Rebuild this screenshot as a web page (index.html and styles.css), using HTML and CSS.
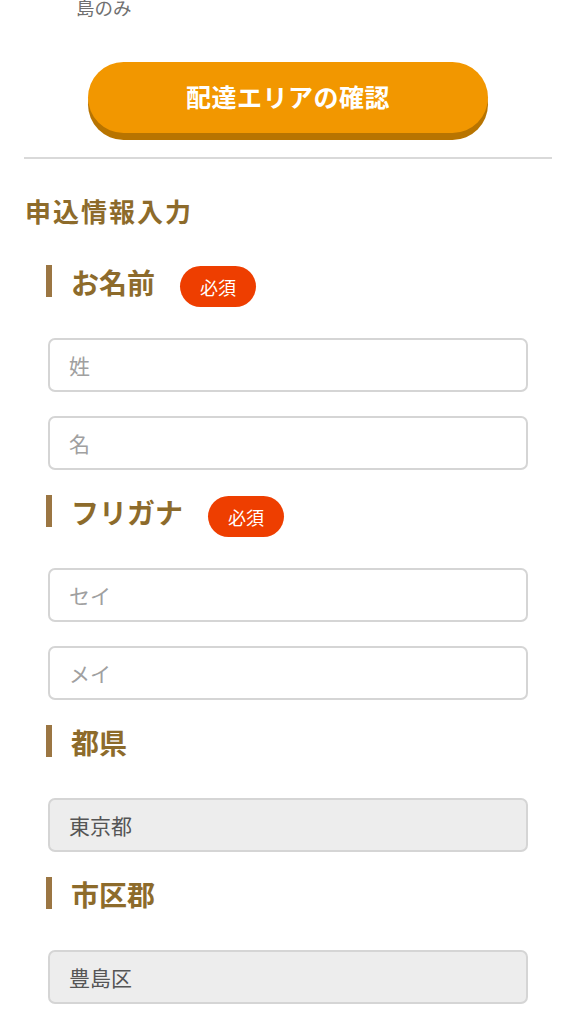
FILE: index.html
```html
<!DOCTYPE html>
<html lang="ja">
<head>
<meta charset="utf-8">
<title>申込情報入力</title>
<link rel="stylesheet" href="styles.css">
</head>
<body>
<div class="page">
  <p class="note">島のみ</p>
  <button class="area-btn" type="button">配達エリアの確認</button>
  <hr class="divider">
  <h2 class="title">申込情報入力</h2>
  <div class="form">
    <div class="field">
      <div class="label-row"><span class="label">お名前</span><span class="badge">必須</span></div>
      <div class="inputs">
        <input class="input" type="text" placeholder="姓">
        <input class="input" type="text" placeholder="名">
      </div>
    </div>
    <div class="field">
      <div class="label-row"><span class="label">フリガナ</span><span class="badge">必須</span></div>
      <div class="inputs">
        <input class="input" type="text" placeholder="セイ">
        <input class="input" type="text" placeholder="メイ">
      </div>
    </div>
    <div class="field">
      <div class="label-row"><span class="label">都県</span></div>
      <div class="inputs">
        <input class="input readonly" type="text" value="東京都" readonly>
      </div>
    </div>
    <div class="field">
      <div class="label-row"><span class="label">市区郡</span></div>
      <div class="inputs">
        <input class="input readonly" type="text" value="豊島区" readonly>
      </div>
    </div>
  </div>
</div>
</body>
</html>
```

FILE: styles.css
```css
* { box-sizing: border-box; }
html, body {
  margin: 0;
  padding: 0;
  background: #fff;
  font-family: "Noto Sans CJK JP", "Noto Sans", sans-serif;
}
.page {
  width: 576px;
  overflow: hidden;
}
.note {
  margin: 0;
  padding-left: 76px;
  font-size: 18.5px;
  line-height: 14px;
  height: 18px;
  color: #707070;
}
.area-btn {
  display: block;
  margin: 44px auto 0;
  width: 400px;
  height: 71px;
  border: none;
  border-radius: 36px;
  background: #f29700;
  box-shadow: 0 7px 0 #b87400;
  color: #fff;
  font-family: inherit;
  font-size: 25px;
  font-weight: 700;
  letter-spacing: 0.5px;
  padding: 0 0 3px;
}
.divider {
  margin: 24px 24px 0;
  border: none;
  height: 2px;
  background: #d9d9d9;
}
.title {
  margin: 32px 0 0;
  padding-left: 25px;
  font-size: 26px;
  line-height: 40px;
  letter-spacing: 2px;
  font-weight: 700;
  color: #8d6b2b;
}
.form {
  padding: 0 48px;
  display: flex;
  flex-direction: column;
  gap: 25px;
  margin-top: 34px;
}
.label-row {
  display: flex;
  align-items: flex-start;
  height: 32px;
  margin-left: -2px;
  margin-bottom: 41px;
}
.label {
  display: block;
  border-left: 6px solid #9b7643;
  padding-left: 19px;
  height: 32px;
  font-size: 28px;
  line-height: 34px;
  font-weight: 700;
  color: #8d6b2b;
}
.badge {
  display: flex;
  align-items: center;
  justify-content: center;
  margin-left: 25px;
  margin-top: 1px;
  width: 76px;
  height: 41px;
  border-radius: 21px;
  background: #ee3e00;
  color: #fff;
  font-size: 18px;
  flex-shrink: 0;
}
.inputs {
  display: flex;
  flex-direction: column;
  gap: 24px;
}
.input {
  display: block;
  width: 480px;
  height: 54px;
  border: 2px solid #d5d5d5;
  border-radius: 7px;
  background: #fff;
  padding: 0 19px;
  font-family: inherit;
  font-size: 21px;
  color: #555;
  outline: none;
}
.input::placeholder {
  color: #a0a0a0;
}
.input.readonly {
  background: #ededed;
}
```
